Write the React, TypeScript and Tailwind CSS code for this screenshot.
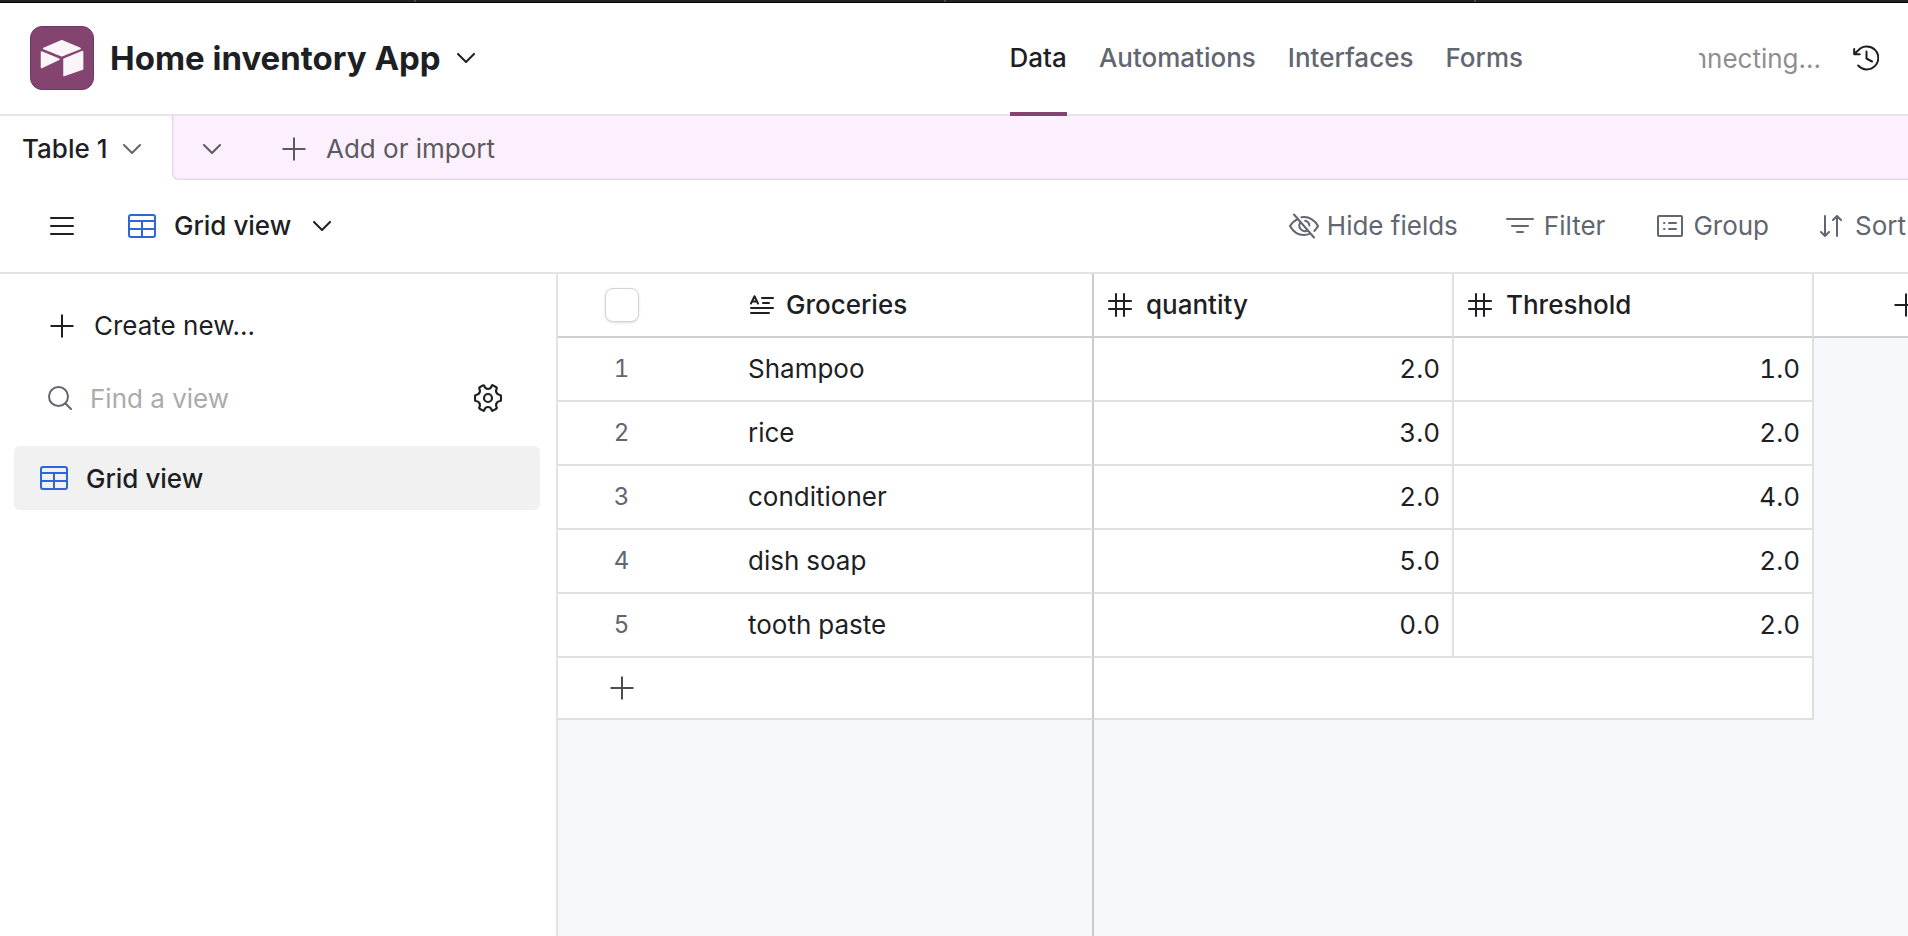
import React from 'react';

type IconProps = { className?: string };

const Plus = ({ className = '' }: IconProps) => (
  <svg viewBox="0 0 24 24" className={`size-6 shrink-0 ${className}`} fill="none" stroke="currentColor" strokeWidth="2" aria-hidden="true">
    <path d="M12 .5v23M.5 12h23" />
  </svg>
);

const Caret = ({ className = '' }: IconProps) => (
  <svg viewBox="0 0 18 10" className={`h-[10px] w-[18px] shrink-0 ${className}`} fill="none" stroke="currentColor" strokeWidth="2" strokeLinecap="round" strokeLinejoin="round" aria-hidden="true">
    <path d="M1 1l8 8 8-8" />
  </svg>
);

const GridIcon = () => (
  <svg viewBox="0 0 28 24" className="h-6 w-7 shrink-0 text-[#2d66d9]" fill="none" stroke="currentColor" strokeWidth="2" aria-hidden="true">
    <rect x="1" y="1" width="26" height="22" rx="2" />
    <path d="M1 7h26M1 15h26M14 7v16" />
  </svg>
);

const HashIcon = () => (
  <svg viewBox="0 0 24 24" className="size-6 shrink-0" fill="none" stroke="currentColor" strokeWidth="2" strokeLinecap="round" aria-hidden="true">
    <path d="M8 1v22M16 1v22M1 8h22M1 16h22" />
  </svg>
);

const LongTextIcon = () => (
  <svg viewBox="0 0 24 20" className="h-5 w-6 shrink-0" fill="none" stroke="currentColor" strokeWidth="2" strokeLinecap="round" strokeLinejoin="round" aria-hidden="true">
    <path d="M1 8.500 4.500 1.200 8 8.500M2.300 6.400h4.400M12 3h11M13 8h6M1 13h22M1 18h18" />
  </svg>
);

const Logo = () => (
  <span className="flex size-16 shrink-0 items-center justify-center rounded-xl border border-[#73386a] bg-[#83446f]">
    <svg viewBox="0 0 64 64" className="size-16 shrink-0" fill="#faf5f9" stroke="#faf5f9" strokeWidth="1.500" strokeLinejoin="round" aria-hidden="true">
      <path d="M13.700 22.500 31.800 14.800 50.200 22.500 31.800 29.700z" />
      <path d="M11.500 26 29 33.300 11.500 41.500z" />
      <path d="M52.600 25.500V43L34 49.600V33.200z" />
    </svg>
  </span>
);

const rows = [
  ['Shampoo', '2.0', '1.0'],
  ['rice', '3.0', '2.0'],
  ['conditioner', '2.0', '4.0'],
  ['dish soap', '5.0', '2.0'],
  ['tooth paste', '0.0', '2.0'],
];

function Header() {
  return (
    <header className="flex h-28 shrink-0 border-b-2 border-[#e5e5e5] bg-white pr-[29px] pb-[2px] pl-[30px]">
      <button type="button" className="flex items-center gap-4">
        <Logo />
        <span className="text-[33px] font-bold whitespace-nowrap">Home inventory App</span>
        <Caret />
      </button>
      <nav className="ml-auto flex gap-8 font-medium text-[#616670]">
        <a href="#data" className="-mb-1 flex items-center border-b-4 border-[#83446f] text-[#1d1f25]">Data</a>
        <a href="#automations" className="flex items-center">Automations</a>
        <a href="#interfaces" className="flex items-center">Interfaces</a>
        <a href="#forms" className="flex items-center">Forms</a>
      </nav>
      <div className="ml-44 flex w-[122px] items-center justify-end overflow-hidden pt-[2px] whitespace-nowrap text-[#8e8f92]">nnecting...</div>
      <button type="button" aria-label="History" className="ml-8">
        <svg viewBox="0 0 26 26" className="size-[26px]" fill="none" stroke="currentColor" strokeWidth="2" strokeLinecap="round" strokeLinejoin="round" aria-hidden="true">
          <path d="M5.200 20.500A11.500 11.500 0 1 0 5 5.500L1.500 9M1.200 4v5.300h5.500M13.500 6.500v7l5.500 3" />
        </svg>
      </button>
    </header>
  );
}

function TableTabs() {
  return (
    <div className="flex h-16 shrink-0 bg-[#fcf0fe]">
      <button type="button" className="flex w-[172px] shrink-0 items-center justify-between rounded-tr-md bg-white pt-px pr-[31px] pl-[22px] font-medium">
        Table 1
        <Caret className="text-[#616670]" />
      </button>
      <div className="flex flex-1 bg-white">
        <div className="flex flex-1 items-center rounded-bl-md border-b border-l border-[#e6d8e8] bg-[#fcf0fe] pt-[2px] pl-[30px] text-[#5b5a60] shadow-[inset_1px_-1px_1px_#f1e3f3]">
          <button type="button" aria-label="All tables">
            <Caret />
          </button>
          <button type="button" className="ml-[61px] flex items-center gap-5">
            <Plus />
            Add or import
          </button>
        </div>
      </div>
    </div>
  );
}

function Toolbar() {
  return (
    <div className="flex h-[94px] shrink-0 items-center overflow-hidden border-b-2 border-[#e3e3e3] bg-white pr-[2px] pl-[50px]">
      <button type="button" aria-label="Toggle sidebar">
        <svg viewBox="0 0 24 18" className="h-[18px] w-6" stroke="currentColor" strokeWidth="2" strokeLinecap="round" aria-hidden="true">
          <path d="M1 1h22M1 9h22M1 17h22" />
        </svg>
      </button>
      <button type="button" className="ml-[54px] flex items-center font-medium">
        <GridIcon />
        <span className="mr-[22px] ml-[18px]">Grid view</span>
        <Caret />
      </button>
      <div className="ml-auto flex shrink-0 items-center whitespace-nowrap text-[#616670]">
        <button type="button" className="flex items-center gap-2">
          <svg viewBox="0 0 30 26" className="h-[26px] w-[30px]" fill="none" stroke="currentColor" strokeWidth="2" strokeLinecap="round" strokeLinejoin="round" aria-hidden="true">
            <path d="M5 1.500 25 24.500M9 5.800C4.500 8 2 11.300 1 13c2.300 4.200 7 9 14 9 2.300 0 4.300-.5 6-1.300M12.500 4.300C20.500 3 26.500 8 29 13c-.8 1.600-2 3.300-3.700 4.900M11.500 9.300A5.500 5.500 0 0 0 18.400 17.500M16.200 7.800a5.500 5.500 0 0 1 4.200 4.700" />
          </svg>
          Hide fields
        </button>
        <button type="button" className="ml-12 flex items-center gap-[10px]">
          <svg viewBox="0 0 28 16" className="h-4 w-7" stroke="currentColor" strokeWidth="2" strokeLinecap="round" aria-hidden="true">
            <path d="M1 1h26M6 8h16M11 14h6" />
          </svg>
          Filter
        </button>
        <button type="button" className="ml-[52px] flex items-center gap-[10px]">
          <svg viewBox="0 0 26 22" className="h-[22px] w-[26px]" fill="none" stroke="currentColor" strokeWidth="2" strokeLinecap="round" aria-hidden="true">
            <rect x="1" y="1" width="24" height="20" rx="1" />
            <path d="M7 8h.5M7 14h.5M12 8h7M12 14h7" />
          </svg>
          Group
        </button>
        <button type="button" className="ml-[50px] flex items-center gap-3">
          <svg viewBox="0 0 24 22" className="h-[22px] w-6" fill="none" stroke="currentColor" strokeWidth="2" strokeLinecap="round" strokeLinejoin="round" aria-hidden="true">
            <path d="M6 1v20M2 17l4 4 4-4M18 21V1M14 5l4-4 4 4" />
          </svg>
          Sort
        </button>
      </div>
    </div>
  );
}

function Sidebar() {
  return (
    <aside className="w-[558px] shrink-0 border-r-2 border-[#e3e3e3] bg-white pt-5 pr-4 pl-[14px]">
      <button type="button" className="flex h-16 items-center gap-5 pl-9">
        <Plus />
        Create new...
      </button>
      <div className="mt-2 flex h-16 items-center pr-[38px] pl-[34px]">
        <svg viewBox="0 0 24 24" className="size-6 shrink-0 text-[#616670]" fill="none" stroke="currentColor" strokeWidth="2" strokeLinecap="round" aria-hidden="true">
          <circle cx="10.500" cy="10.500" r="9.500" />
          <path d="M17.500 17.500 23 23" />
        </svg>
        <input type="text" aria-label="Find a view" placeholder="Find a view" className="ml-[18px] min-w-0 flex-1 pt-[2px] outline-none placeholder:text-[#ababab]" />
        <button type="button" aria-label="View settings">
          <svg viewBox="0 0 28 28" className="size-7" fill="none" stroke="currentColor" strokeWidth="2.200" strokeLinecap="round" strokeLinejoin="round" aria-hidden="true">
            <circle cx="14" cy="14" r="4" />
            <path d="M10.200 1.800C10.800 4 12 5 14 5s3.200-1 3.800-3.200Q18.200 1 19 1.400L22.300 3.300Q23 3.800 22.700 4.500C21.500 7 22 10.500 26 11Q27 11.200 27 12v4Q27 16.800 26 17C22 17.500 21.500 21 22.700 23.500Q23 24.200 22.300 24.700L19 26.600Q18.200 27 17.800 26.200C17.200 24 16 23 14 23s-3.200 1-3.800 3.200Q9.800 27 9 26.600L5.700 24.700Q5 24.200 5.300 23.500C6.500 21 6 17.500 2 17Q1 16.800 1 16v-4Q1 11.200 2 11C6 10.500 6.500 7 5.300 4.500Q5 3.800 5.700 3.300L9 1.400Q9.800 1 10.200 1.800z" />
          </svg>
        </button>
      </div>
      <a href="#grid-view" className="mt-4 flex h-16 items-center gap-[18px] rounded-md bg-[#f1f1f1] pl-[26px] font-medium">
        <GridIcon />
        <span className="pt-[2px]">Grid view</span>
      </a>
    </aside>
  );
}

function Grid() {
  return (
    <main className="flex min-w-0 flex-1 flex-col overflow-hidden bg-[#f6f8fc]">
      <table className="w-full table-fixed border-separate border-spacing-0 tabular-nums">
        <colgroup>
          <col className="w-[176px]" />
          <col className="w-[360px]" />
          <col className="w-[360px]" />
          <col className="w-[360px]" />
          <col />
        </colgroup>
        <thead>
          <tr className="h-16 bg-white text-left *:border-b-2 *:border-b-[#cfcfcf] *:p-0 *:font-medium">
            <th className="align-middle">
              <input type="checkbox" aria-label="Select all rows" className="ml-[47px] block size-[34px] appearance-none rounded-lg border border-[#d4d4d4] bg-white shadow-sm" />
            </th>
            <th className="border-r-2 border-r-[#cbcbcb]">
              <div className="flex items-center gap-3 pl-4"><LongTextIcon />Groceries</div>
            </th>
            <th className="border-r-2 border-r-[#dde1e3]">
              <div className="flex items-center gap-[14px] pl-[14px]"><HashIcon />quantity</div>
            </th>
            <th className="border-r-2 border-r-[#dde1e3]">
              <div className="flex items-center gap-[14px] pl-[14px]"><HashIcon />Threshold</div>
            </th>
            <th className="overflow-hidden">
              <button type="button" aria-label="Add field" className="ml-20 block"><Plus /></button>
            </th>
          </tr>
        </thead>
        <tbody>
          {rows.map(([name, quantity, threshold], i) => (
            <tr key={name} className="h-16 *:p-0">
              <td className="border-b-2 border-[#dde1e4] bg-white text-[24px] text-[#616670]">
                <span className="block w-[127px] text-center">{i + 1}</span>
              </td>
              <td className="border-r-2 border-b-2 border-r-[#cbcbcb] border-b-[#dde1e4] bg-white">
                <span className="pl-[14px]">{name}</span>
              </td>
              <td className="border-r-2 border-b-2 border-[#dde1e4] bg-white text-right">
                <span className="pr-3">{quantity}</span>
              </td>
              <td className="border-r-2 border-b-2 border-[#dde1e4] bg-white text-right">
                <span className="pr-3">{threshold}</span>
              </td>
              <td />
            </tr>
          ))}
        </tbody>
        <tfoot>
          <tr className="h-[62px] *:p-0">
            <td className="border-b-2 border-[#dcdfe2] bg-white">
              <button type="button" aria-label="Add row" className="ml-[52px] block text-[#4c4c50]"><Plus /></button>
            </td>
            <td className="border-r-2 border-b-2 border-r-[#cbcbcb] border-b-[#dcdfe2] bg-white" />
            <td colSpan={2} className="border-r-2 border-b-2 border-[#dcdfe2] bg-white" />
            <td />
          </tr>
        </tfoot>
      </table>
      <div className="w-[536px] flex-1 border-r-2 border-[#cbcbcb]" />
    </main>
  );
}

export default function App() {
  return (
    <div className="flex min-h-screen flex-col overflow-hidden bg-white font-['Inter','Liberation_Sans',sans-serif] text-[26px] leading-8 text-[#1d1f25]">
      <div className="mb-px flex h-[3px] shrink-0 border-b border-black bg-[#222222]">
        <span className="w-[416px] shrink-0 border-r-2 border-[#4a4a4a]" />
        <span className="w-[530px] shrink-0 border-r-2 border-[#4a4a4a]" />
        <span className="w-[530px] shrink-0 border-r-2 border-[#4a4a4a]" />
      </div>
      <Header />
      <TableTabs />
      <Toolbar />
      <div className="flex flex-1">
        <Sidebar />
        <Grid />
      </div>
    </div>
  );
}
